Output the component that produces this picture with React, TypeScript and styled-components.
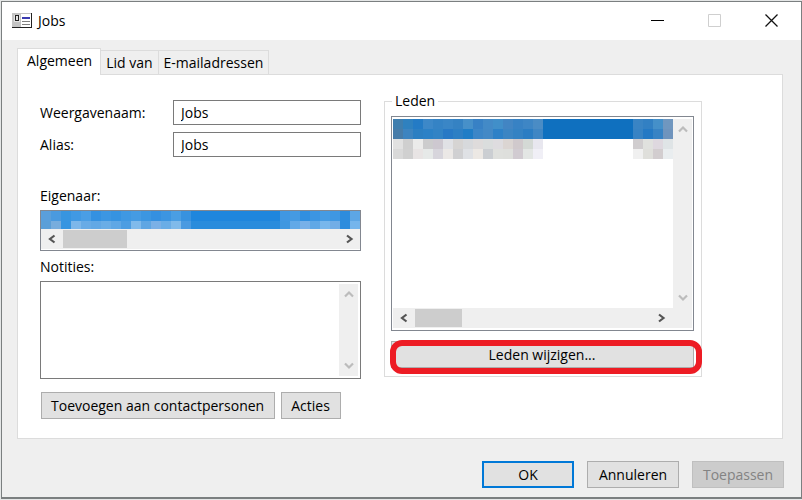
import { useState } from "react";
import styled, { createGlobalStyle, css } from "styled-components";

const GlobalStyle = createGlobalStyle`
  *, *::before, *::after { box-sizing: border-box; }
  body { margin: 0; background: #e4e6e6; }
  body, button, input, textarea {
    font-family: "Open Sans", "Noto Sans", sans-serif;
    font-size: 14px;
    line-height: 18px;
    color: #000;
  }
`;

const Page = styled.div`
  padding: 1px 0 1px 1px;
`;

const Dialog = styled.main`
  display: flex;
  flex-direction: column;
  background: #efefef;
  border: 1px solid #7b7f80;
  border-bottom-width: 2px;
`;

const TitleBar = styled.header`
  display: flex;
  align-items: center;
  height: 38px;
  padding-left: 10px;
  background: #fff;
`;

const Title = styled.h1`
  flex: 1;
  margin: 0 0 0 6px;
  font-size: 14px;
  line-height: 18px;
  font-weight: 400;
`;

const CaptionButton = styled.button`
  display: grid;
  place-items: center;
  width: 57px;
  height: 36px;
  padding: 0 2px 2px 0;
  border: 0;
  background: none;
`;

const Body = styled.div`
  padding: 8px 18px 0 15px;
`;

const TabList = styled.div`
  display: flex;
  align-items: flex-end;
`;

const Tab = styled.button<{ $active: boolean }>`
  height: 24px;
  padding: 0 5px;
  border: 1px solid #dcdcdc;
  border-left: 0;
  border-bottom: 0;
  background: #efefef;
  white-space: nowrap;
  ${(p) =>
    p.$active &&
    css`
      height: 27px;
      margin-bottom: -1px;
      padding: 0 8px 3px 9px;
      border-left: 1px solid #dcdcdc;
      background: #fff;
      position: relative;
    `}
`;

const Panel = styled.section`
  display: grid;
  grid-template-columns: minmax(0, 321fr) minmax(0, 318fr);
  column-gap: 23px;
  padding: 17px 80px 19px 22px;
  border: 1px solid #dcdcdc;
  background: #fff;
`;

const Column = styled.div`
  display: flex;
  flex-direction: column;
  padding-top: 8px;
`;

const FieldRow = styled.div`
  display: grid;
  grid-template-columns: 133px minmax(0, 1fr);
  align-items: center;
  margin-bottom: 7px;
`;

const Label = styled.label`
  line-height: 18px;
`;

const BlockLabel = styled.label<{ $space: number }>`
  margin-top: ${(p) => p.$space}px;
  padding-bottom: 5px;
`;

const TextBox = styled.input`
  width: 100%;
  height: 25px;
  padding: 0 7px;
  border: 1px solid #7a7a7a;
  border-radius: 0;
  background: #fff;
`;

const ListBox = styled.div`
  display: flex;
  flex-direction: column;
  border: 1px solid #828790;
  background: #fff;
`;

const OwnerBox = styled(ListBox)`
  height: 41px;
`;

const MembersBox = styled(ListBox)`
  height: 215px;
  padding: 2px 1px 2px 1px;
`;

const MembersArea = styled.div`
  display: flex;
  flex: 1;
`;

const MembersItems = styled.div`
  flex: 1;
  min-width: 0;
`;

const NotesBox = styled.div`
  display: flex;
  height: 98px;
  padding: 2px;
  border: 1px solid #7a7a7a;
`;

const NotesInput = styled.textarea`
  flex: 1;
  min-width: 0;
  padding: 2px 4px;
  border: 0;
  resize: none;
`;

const Mosaic = styled.svg`
  display: block;
  width: 100%;
`;

const Track = styled.div<{ $vertical?: boolean; $corner?: boolean }>`
  display: flex;
  flex: none;
  background: #efefef;
  ${(p) =>
    p.$vertical
      ? "flex-direction: column; justify-content: space-between; width: 19px;"
      : "align-items: center; height: 20px;"}
  ${(p) => p.$corner && "padding-right: 20px;"}
`;

const ArrowButton = styled.button`
  display: grid;
  place-items: center;
  width: 20px;
  height: 20px;
  padding: 0;
  border: 0;
  background: none;
`;

const Thumb = styled.div<{ $size: number }>`
  width: ${(p) => p.$size}px;
  height: 18px;
  margin-right: auto;
  margin-left: 2px;
  background: #cdcdcd;
`;

const ButtonRow = styled.div`
  display: flex;
  gap: 6px;
  margin: 13px 0 0 1px;
`;

const PushButton = styled.button<{ $primary?: boolean }>`
  height: 27px;
  padding: 0 10px 0 9px;
  border: ${(p) => (p.$primary ? "2px solid #0078d7" : "1px solid #adadad")};
  background: #e1e1e1;
  white-space: nowrap;
  &:disabled {
    border-color: #bfbfbf;
    background: #cccccc;
    color: #838383;
  }
`;

const Group = styled.fieldset`
  min-width: 0;
  margin: 0;
  padding: 6px 7px 8px 6px;
  border: 1px solid #dcdcdc;
  align-self: start;
`;

const Legend = styled.legend`
  margin-left: 1px;
  padding: 0 3px;
`;

const Highlight = styled.div`
  position: relative;
  margin-top: 10px;
  &::after {
    content: "";
    position: absolute;
    inset: -1px -8px -6px -1px;
    border: 6px solid #ed1c24;
    border-radius: 12px;
    pointer-events: none;
  }
  ${PushButton} {
    display: block;
    width: 100%;
  }
`;

const Footer = styled.footer`
  display: flex;
  justify-content: flex-end;
  gap: 13px;
  padding: 22px 17px 9px;
  ${PushButton} {
    width: 92px;
    padding: 0;
  }
`;

const ownerRows = [
  "5a9fdb 4a9adf 3895e0 4199e3 4a9ee5 3491e1 3c96e2 3693e1 3f98e2 459be3 3c96e1 3590e0 3c95e1 4a9ee3 3892df 1f86dd*9 4097e2 459ae2 318fe0 3c95e2 459be3 3f97e2 2d8cdd 5da6e5",
  "5b9fd8 78addd 3695e1 7db7ea 68abe6 62a8e5 6aade6 5fa7e5 4c9de2 80baeb 5fa6e3 7bb0e6 6aade6 80baea 4a9ae1 2a8cdc*9 3f97e0 62a9e7 78b0e8 60a8e6 78b7ec 72ade6 2d8cdd 75b5ec",
];

const memberRows = [
  "3f7eae 2f81bf 247bc5 3d88c8 3583c5 3a86c6 3582c3 4790c9 3881c5 438ac7 418fc9 4285c3 3882c4 3e86c5 4a8cc5 0f70bf*9 3984c4 3280c3 4590c9 7097bf",
  "477ca9 3d84c0 2c7fc2 2c81c6 3283c5 2879c5 2d7fc4 207dc6 3c86c7 4389c6 2e81c7 3c85c3 3482c3 2b7dc3 3f86c4 0f70bf*9 3783c4 2479c4 3883c4 6f94bd",
  "e1e1e1 cfcfcf ebebea cccccd cdc8d0 e0e1e5 d6d4d3 d7d9dc dedbdb dadddd dedcdf dbd5d2 d0c9cc d4d9d5 e8e7ef ffffff*9 d0cdcf e0e1de ded8df dfe4e6",
  "d9d9d9 d0d0d0 e8e4e4 e6e9e8 d7d5dc ebe8e6 d0d0d2 dfe1e5 ece8e4 cbced2 dfe0dd dedfdc d1cbd1 e3e6e4 f0eff6 ffffff*9 f0f0f0 dfdfdb d2cdcf e9edef",
];

const expand = (row: string) =>
  row.split(" ").flatMap((entry) => {
    const [hex, count] = entry.split("*");
    return Array(Number(count ?? 1)).fill(`#${hex}`) as string[];
  });

function PixelRows({ rows, height }: { rows: string[]; height: number }) {
  const cells = rows.map(expand);
  return (
    <Mosaic
      height={height}
      viewBox={`0 0 ${cells[0].length * 10} ${height}`}
      preserveAspectRatio="none"
      shapeRendering="crispEdges"
      aria-hidden="true"
    >
      {cells.map((row, y) =>
        row.map((fill, x) => (
          <rect key={`${x}-${y}`} x={x * 10} y={y * 10} width="10" height="10" fill={fill} />
        )),
      )}
    </Mosaic>
  );
}

const arrows = {
  left: "M8.500 1.5 4 5 8.500 8.5",
  right: "M2 1.5 6.500 5 2 8.5",
  up: "M1 7.500 5 3.500 9 7.500",
  down: "M1 2.500 5 6.500 9 2.500",
};

function Arrow({ to, label }: { to: keyof typeof arrows; label: string }) {
  const faded = to === "up" || to === "down";
  return (
    <ArrowButton type="button" aria-label={label}>
      <svg width="10" height="10" viewBox="0 0 10 10" fill="none" stroke={faded ? "#bcbcbc" : "#555"} strokeWidth="2.2">
        <path d={arrows[to]} />
      </svg>
    </ArrowButton>
  );
}

function HorizontalScroll({ thumb, corner }: { thumb: number; corner?: boolean }) {
  return (
    <Track $corner={corner}>
      <Arrow to="left" label="Naar links" />
      <Thumb $size={thumb} />
      <Arrow to="right" label="Naar rechts" />
    </Track>
  );
}

function VerticalScroll() {
  return (
    <Track $vertical>
      <Arrow to="up" label="Omhoog" />
      <Arrow to="down" label="Omlaag" />
    </Track>
  );
}

function CardIcon() {
  return (
    <svg width="20" height="16" viewBox="0 0 20 16" aria-hidden="true" shapeRendering="crispEdges">
      <rect width="20" height="15" fill="#c4c4c4" />
      <rect x="9" y="1" width="10" height="13" fill="#fff" />
      <path d="M19 0h1v15H0v-1h19z" fill="#222" />
      <path d="M2 2h6v7H2z" fill="#e4e4e4" />
      <path d="M3 2h4v1H4v4h2v1H3zM6 3h1v5H6z" fill="#222" />
      <path d="M10 4h8v2h-8z" fill="#3a3ab0" />
      <path d="M10 8h8v1h-8zM10 11h8v1h-8z" fill="#808080" />
    </svg>
  );
}

const tabs = ["Algemeen", "Lid van", "E-mailadressen"];

export default function App() {
  const [active, setActive] = useState(tabs[0]);
  return (
    <>
      <GlobalStyle />
      <Page>
        <Dialog>
          <TitleBar>
            <CardIcon />
            <Title>Jobs</Title>
            <CaptionButton type="button" aria-label="Minimaliseren">
              <svg width="13" height="13" stroke="#000" shapeRendering="crispEdges"><path d="M0 6.500h13" /></svg>
            </CaptionButton>
            <CaptionButton type="button" aria-label="Maximaliseren">
              <svg width="13" height="13" fill="none" stroke="#cfcfcf"><path d="M.5.5h12v12H.5z" /></svg>
            </CaptionButton>
            <CaptionButton type="button" aria-label="Sluiten">
              <svg width="13" height="13" stroke="#111" strokeWidth="1.3"><path d="M.5.5l12 12M12.500.5l-12 12" /></svg>
            </CaptionButton>
          </TitleBar>
          <Body>
            <TabList role="tablist">
              {tabs.map((tab) => (
                <Tab
                  key={tab}
                  type="button"
                  role="tab"
                  aria-selected={tab === active}
                  $active={tab === active}
                  onClick={() => setActive(tab)}
                >
                  {tab}
                </Tab>
              ))}
            </TabList>
            <Panel role="tabpanel">
              <Column>
                <FieldRow>
                  <Label htmlFor="name">Weergavenaam:</Label>
                  <TextBox id="name" defaultValue="Jobs" />
                </FieldRow>
                <FieldRow>
                  <Label htmlFor="alias">Alias:</Label>
                  <TextBox id="alias" defaultValue="Jobs" />
                </FieldRow>
                <BlockLabel as="span" id="owner-label" $space={23}>Eigenaar:</BlockLabel>
                <OwnerBox role="group" aria-labelledby="owner-label">
                  <PixelRows rows={ownerRows} height={18} />
                  <HorizontalScroll thumb={64} />
                </OwnerBox>
                <BlockLabel htmlFor="notes" $space={7}>Notities:</BlockLabel>
                <NotesBox>
                  <NotesInput id="notes" />
                  <VerticalScroll />
                </NotesBox>
                <ButtonRow>
                  <PushButton type="button">Toevoegen aan contactpersonen</PushButton>
                  <PushButton type="button">Acties</PushButton>
                </ButtonRow>
              </Column>
              <Group>
                <Legend>Leden</Legend>
                <MembersBox>
                  <MembersArea>
                    <MembersItems>
                      <PixelRows rows={memberRows} height={40} />
                    </MembersItems>
                    <VerticalScroll />
                  </MembersArea>
                  <HorizontalScroll thumb={47} corner />
                </MembersBox>
                <Highlight>
                  <PushButton type="button">Leden wijzigen...</PushButton>
                </Highlight>
              </Group>
            </Panel>
          </Body>
          <Footer>
            <PushButton type="button" $primary>OK</PushButton>
            <PushButton type="button">Annuleren</PushButton>
            <PushButton type="button" disabled>Toepassen</PushButton>
          </Footer>
        </Dialog>
      </Page>
    </>
  );
}
